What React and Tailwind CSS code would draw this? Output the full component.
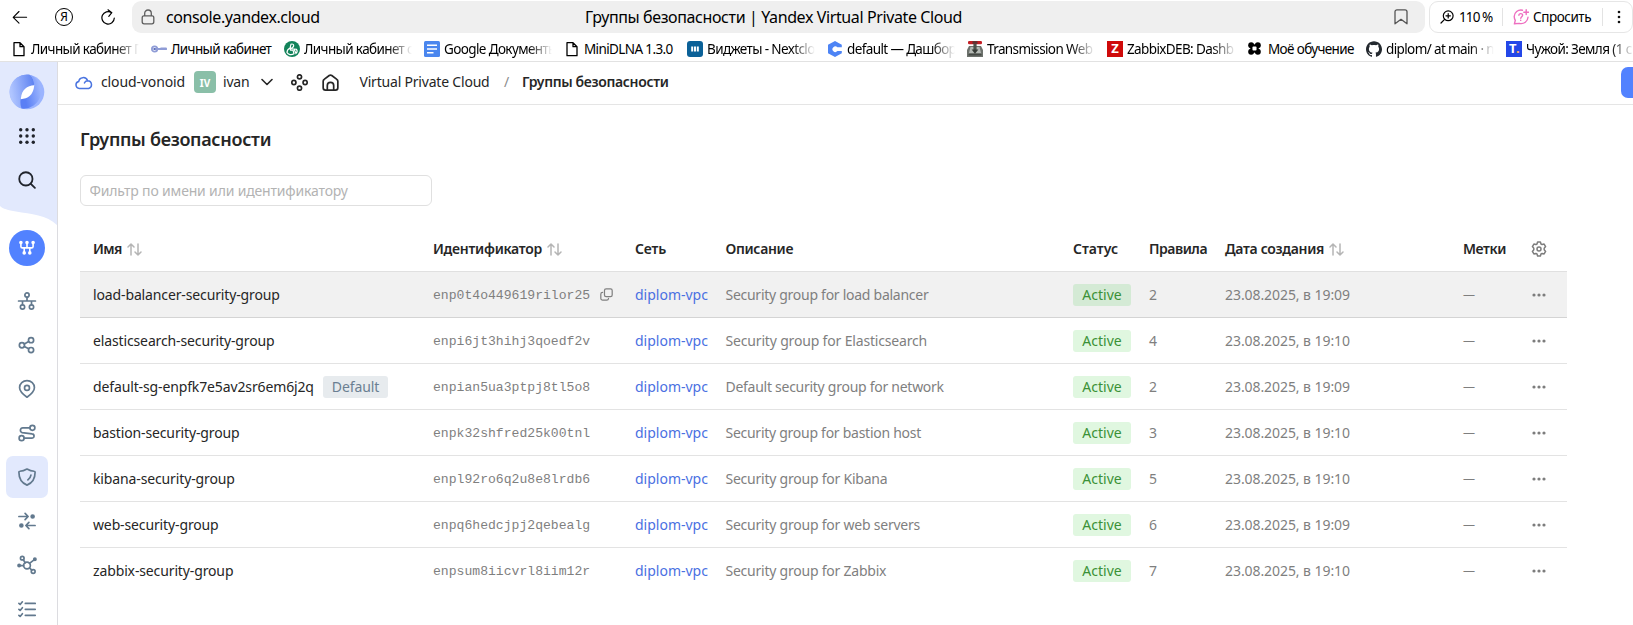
import React from "react";
import { SiGithub } from "react-icons/si";

const COLS =
  "grid grid-cols-[340px_202px_90.500px_347.500px_76px_76px_238px_64px_1fr] items-center pl-[13px]";

function Svg({ className, children, sw = 1.5, vb = "0 0 16 16" }) {
  return (
    <svg
      viewBox={vb}
      className={className}
      fill="none"
      stroke="currentColor"
      strokeWidth={sw}
      strokeLinecap="round"
      strokeLinejoin="round"
    >
      {children}
    </svg>
  );
}

/* ---------- browser chrome ---------- */

const DocIcon = () => (
  <Svg className="size-4 text-black" sw={1.3}>
    <path d="M3 1.7h6l4 4v9H3z M9 1.7v4h4" />
  </Svg>
);
const KeyIcon = () => (
  <Svg className="size-4 text-[#8f9cd6]" sw={1.8}>
    <circle cx="3.6" cy="8" r="2.7" />
    <path d="M3 8h12.4M10 7.4h5" />
    <circle cx="3.6" cy="8" r="0.8" fill="#4356a8" stroke="none" />
  </Svg>
);
const GreenIcon = () => (
  <svg viewBox="0 0 16 16" className="size-4">
    <circle cx="8" cy="8" r="8" fill="#12835a" />
    <path
      d="M7 3.2c1.8-.6 3 .4 2.6 2L8 7.6 6.2 6.4zM3 11.6c0-2 1-3.6 3-4.6l.6 2.2H9l1 3.6c-2.6 1.6-6 1-7-1.2zM10 8l2.4.2c1 1.4 1 3-.4 4.2z"
      fill="none"
      stroke="#fff"
      strokeWidth="1.2"
    />
  </svg>
);
const DocsIcon = () => (
  <svg viewBox="0 0 16 16" className="size-4">
    <rect width="16" height="16" rx="1.5" fill="#4a86ee" />
    <path d="M3 4.2h10M3 8h10M3 11.8h6.5" stroke="#fff" strokeWidth="1.6" />
  </svg>
);
const WidgetIcon = () => (
  <svg viewBox="0 0 16 16" className="size-4">
    <rect width="16" height="16" rx="3" fill="#0b6198" />
    <path d="M5.2 5.5v5M8 5.5v5M10.8 5.5v5" stroke="#fff" strokeWidth="2" />
  </svg>
);
const CIcon = () => (
  <svg viewBox="0 0 16 16" className="size-4">
    <path
      d="M8 0l6.8 3.8v2.5h-4.4A2.8 2.8 0 1 0 10.4 10h4.4v2.3L8 16 1 12.2V3.8z"
      fill="#4d84f5"
    />
  </svg>
);
const TransmissionIcon = () => (
  <svg viewBox="0 0 16 16" className="size-4">
    <path d="M2 5h12L16 9v7H0V9z" fill="#6d726d" />
    <path d="M3.500 6h9l1.500 6H2z" fill="#b4b9b4" />
    <rect x="1" y="0" width="14" height="3.2" rx="1.2" fill="#c41f25" />
    <rect x="5.5" y="0.2" width="5" height="2.6" fill="#5c3334" />
    <rect x="6.4" y="3" width="3.200" height="6" fill="#4d534d" />
    <path d="M4.6 8.6h6.8L8 12.8z" fill="#363b36" />
    <path d="M1.5 13.8h13" stroke="#3c403c" strokeWidth="1.2" />
  </svg>
);
const LetterBox = ({ bg, children }) => (
  <span
    className={`flex size-4 items-center justify-center text-[13px] font-bold leading-none tracking-normal text-white ${bg}`}
  >
    {children}
  </span>
);
const KnotIcon = () => (
  <svg viewBox="0 0 14 14" className="size-[13px]" fill="#000">
    <circle cx="3.4" cy="3.4" r="3.2" />
    <circle cx="10.6" cy="3.4" r="3.2" />
    <circle cx="3.4" cy="10.6" r="3.2" />
    <circle cx="10.6" cy="10.6" r="3.2" />
    <path d="M2.5 2.5h9v9h-9z" />
    <rect x="4.800" y="4.800" width="4.400" height="4.400" rx="1" fill="#fff" />
  </svg>
);
const TIcon = () => (
  <span className="flex size-4 items-center justify-center bg-[#2447e8] text-[13px] font-bold leading-none text-white">
    T<span className="text-[#ffb061]">.</span>
  </span>
);

const BOOKMARKS = [
  { w: "w-[140px]", icon: <DocIcon />, text: "Личный кабинет П", fade: true },
  { w: "w-[133px]", icon: <KeyIcon />, text: "Личный кабинет" },
  { w: "w-[140px]", icon: <GreenIcon />, text: "Личный кабинет с", fade: true },
  { w: "w-[140px]", icon: <DocsIcon />, text: "Google Документы", fade: true },
  { w: "w-[123px]", icon: <DocIcon />, text: "MiniDLNA 1.3.0" },
  { w: "w-[140px]", icon: <WidgetIcon />, text: "Виджеты - Nextclo", fade: true },
  { w: "w-[140px]", icon: <CIcon />, text: "default — Дашбор", fade: true },
  { w: "w-[140px]", icon: <TransmissionIcon />, text: "Transmission Web", fade: true },
  { w: "w-[141px]", icon: <LetterBox bg="bg-[#cf0a0a]">Z</LetterBox>, text: "ZabbixDEB: Dashb", fade: true },
  { w: "w-[118px]", icon: <KnotIcon />, text: "Моё обучение" },
  { w: "w-[140px]", icon: <SiGithub className="size-4 text-[#24292f]" />, text: "diplom/ at main · n", fade: true },
  { w: "w-[140px]", icon: <TIcon />, text: "Чужой: Земля (1 с", fade: true },
];

function AddressRow() {
  return (
    <div className="flex h-[33px] items-center pt-px text-black">
      <div className="flex w-[132px] shrink-0 items-center">
        <Svg className="ml-3 size-4" sw={1.1}>
          <path d="M14.6 8.3H1.4M7 2.5L1.2 8.3 7 14.1" />
        </Svg>
        <span className="ml-[27px] flex size-[18px] items-center justify-center rounded-full border border-black text-[12px] leading-none">
          Я
        </span>
        <Svg className="ml-[27px] size-4" sw={1.2}>
          <path d="M14.300 9A6.200 6.200 0 1 1 11.600 3.700M8 .8l3.8 2.9-3 3.600" />
        </Svg>
      </div>
      <div className="flex h-8 w-[1293px] shrink-0 items-center rounded-[9px] bg-[#efefef]">
        <Svg className="ml-[9px] h-4 w-[14px] text-[#5e5e5e]" sw={1.3} vb="0 0 14 16">
          <path d="M2.8 6.8h8.4c.9 0 1.6.9 1.6 2v4c0 1.2-.8 2-1.9 2H3.1c-1.1 0-1.9-.8-1.9-2v-4c0-1.100.7-2 1.6-2zM3.700 6.800V4.300a3.300 3.300 0 0 1 6.600 0v2.500" />
        </Svg>
        <span className="ml-[11px] w-[419px] text-base tracking-[-0.4px]">console.yandex.cloud</span>
        <span className="text-base tracking-[-0.385px]">
          Группы безопасности | Yandex Virtual Private Cloud
        </span>
        <Svg className="ml-auto mr-[17px] h-4 w-[14px] text-[#555]" sw={1.3} vb="0 0 14 16">
          <path d="M1 14.800V2.800a2 2 0 0 1 2-2h8a2 2 0 0 1 2 2v12l-6-4.500z" />
        </Svg>
      </div>
      <div className="ml-1 flex h-8 flex-1 items-center rounded-[9px] border border-[#e6e6e6] bg-white text-[13.5px]">
        <Svg className="ml-[10px] size-[14px]" sw={1.200} vb="0 0 14 14">
          <circle cx="8.200" cy="5.800" r="4.900" />
          <path d="M4.600 9.400L1 13M8.200 3.600v4.400M6 5.800h4.400" />
        </Svg>
        <span className="ml-[5px] w-[43px] tracking-[-0.9px]">110 %</span>
        <span className="h-[18px] w-px bg-[#e3e3e3]" />
        <Svg className="ml-[10px] size-4 text-[#ee6fc0]" sw={1.4}>
          <path d="M9.500 1.200C5 .300 1.200 3.400 1.200 7.600c0 1.600.5 2.700 1.100 3.700L1.400 14.800l5-.4c4.600.9 8.300-1.900 8.600-6.100" />
          <path d="M5.900 6.200c0-2.200 3.900-2.100 3.700.1-.1 1.400-1.700 1.400-1.800 2.900M7.700 11.300v.1M13.200.800v4.800M10.800 3.200h4.800" />
        </Svg>
        <span className="ml-[4px] w-[69px] whitespace-nowrap tracking-[-0.46px]">Спросить</span>
        <span className="h-[18px] w-px bg-[#e3e3e3]" />
        <svg viewBox="0 0 4 14" className="ml-[14px] h-[14px] w-1 shrink-0" fill="#111">
          <circle cx="2" cy="2" r="1.300" />
          <circle cx="2" cy="7" r="1.300" />
          <circle cx="2" cy="12" r="1.300" />
        </svg>
      </div>
    </div>
  );
}

function Bookmarks() {
  return (
    <div className="flex h-[29px] items-center overflow-hidden border-b border-[#e2e2e2] pl-[11px] pt-[5px] pb-[2px]">
      {BOOKMARKS.map((b, i) => (
        <div key={i} className={`flex shrink-0 items-center gap-1 pr-3 text-[13.5px] tracking-[-0.62px] text-black ${b.w}`}>
          <span className="flex size-4 shrink-0 items-center">{b.icon}</span>
          <span
            className={
              b.fade
                ? "min-w-0 flex-1 overflow-hidden whitespace-nowrap pt-px leading-5 [mask-image:linear-gradient(to_right,#000_78%,transparent)]"
                : "whitespace-nowrap pt-px leading-5"
            }
          >
            {b.text}
          </span>
        </div>
      ))}
    </div>
  );
}

/* ---------- sidebar ---------- */

const NAV = [
  {
    id: "subnets",
    icon: (
      <>
        <circle cx="8" cy="2.700" r="1.900" />
        <circle cx="4" cy="13.300" r="1.900" />
        <circle cx="12" cy="13.300" r="1.900" />
        <path d="M8 4.700V8M.500 8h15M4 8v3.300M12 8v3.300" />
      </>
    ),
  },
  {
    id: "peering",
    icon: (
      <>
        <circle cx="3.500" cy="8.200" r="2.300" />
        <circle cx="11.600" cy="3.700" r="2.300" />
        <circle cx="11.600" cy="12.500" r="2.300" />
        <path d="M5.600 7.100l3.900-2.200M5.600 9.300l3.900 2.100" />
      </>
    ),
  },
  {
    id: "addresses",
    icon: (
      <>
        <path d="M8 15.300C4.500 12.700 1.400 9.800 1.400 6.800a6.600 6.200 0 0 1 13.200 0c0 3-3.100 5.900-6.600 8.500z" />
        <circle cx="8" cy="7" r="2.200" />
      </>
    ),
  },
  {
    id: "routes",
    icon: (
      <>
        <circle cx="12.800" cy="3.400" r="2.200" />
        <circle cx="3.200" cy="12.600" r="2.200" />
        <path d="M10.500 3.400H4.300a2.200 2.200 0 0 0-.6 4.300l8.800 1.100a1.900 1.900 0 0 1-.3 3.800H5.500" />
      </>
    ),
  },
  {
    id: "security",
    active: true,
    icon: (
      <>
        <path d="M8 .900c2.300 1.300 4.500 1.900 6.300 2 .5 0 .9.400.9.900 0 5.500-2.400 9.500-7.200 11.400C3.200 13.300.8 9.300.8 3.800c0-.5.4-.9.9-.9C3.500 2.800 5.700 2.200 8 .900z" />
        <path d="M8.700 10.600c1.500-.8 2.500-2.400 2.800-4.200" />
      </>
    ),
  },
  {
    id: "gateways",
    icon: (
      <>
        <path d="M.800 4h8M6.300 1.300L9 4 6.300 6.700M15.200 12h-8M9.700 9.300L7 12l2.700 2.700" />
        <circle cx="13" cy="4" r="1.300" fill="currentColor" />
        <circle cx="3" cy="12" r="1.300" fill="currentColor" />
      </>
    ),
  },
  {
    id: "topology",
    icon: (
      <>
        <circle cx="8" cy="8.500" r="3" />
        <circle cx="3.800" cy="1.900" r="1.600" />
        <circle cx="13.500" cy="13.800" r="1.700" />
        <circle cx="15" cy="2.900" r="1" fill="currentColor" />
        <circle cx="1" cy="8.500" r="1" fill="currentColor" />
        <path d="M6.400 6l-1.700-2.700M10.200 6.500L14 3.600M5 8.500H2M10.300 10.600l1.900 1.900" />
      </>
    ),
  },
  {
    id: "operations",
    icon: (
      <path d="M6.500 3H15.300M6.500 8.300H15.300M6.500 13.600H15.300M.800 3l1.100 1L3.900 1.600M.800 8.300l1.100 1 2-2.400M.800 13.600l1.100 1 2-2.400" />
    ),
  },
];

function Sidebar() {
  return (
    <aside className="relative flex w-[58px] shrink-0 flex-col items-center border-r border-[#dcdce0] bg-white pr-1 pt-[7px]">
      <svg viewBox="0 0 57 163" className="absolute left-0 top-0 h-[163px] w-[57px]">
        <path d="M0 0h57v163C47 153 31 152 16 149.500 8 148 3 147 0 144z" fill="#e2e9fd" />
      </svg>
      <div className="relative flex h-[45px] shrink-0 items-center">
        <svg viewBox="0 0 36 36" className="size-9">
          <defs>
            <linearGradient id="lgA" x1="0" y1="0.200" x2="1" y2="0">
              <stop offset="0" stopColor="#b0c5ff" />
              <stop offset="1" stopColor="#5a7ff0" />
            </linearGradient>
            <linearGradient id="lgB" x1="0.100" y1="0.300" x2="1" y2="0">
              <stop offset="0" stopColor="#5a7ff5" />
              <stop offset="1" stopColor="#a9c0ff" />
            </linearGradient>
          </defs>
          <circle cx="18" cy="18" r="17.300" fill="#9bb4ff" />
          <path d="M20 .600A17.500 17.500 0 0 0 12.500 34.600c-1.500-4-1.500-8.600-.2-12.600C14 16 24 14 25 11.500 25.500 7 23.500 2.500 20 .600z" fill="url(#lgA)" />
          <path d="M12.500 34.600A17.500 17.500 0 0 0 20 .600C23.500 2.500 25.500 7 25 11.500L12.300 22c-1.300 4-1.300 8.600.2 12.600z" fill="url(#lgB)" />
          <path d="M25.300 11.200c-7.300.6-12.600 3.800-13.600 14 7.300-.7 12.600-4 13.600-14z" fill="#fff" />
        </svg>
      </div>
      <div className="relative flex h-11 shrink-0 items-center">
        <svg viewBox="0 0 16 16" className="size-4" fill="#20242c">
          {[1.7, 8, 14.3].map((y) =>
            [1.7, 8, 14.3].map((x) => <circle key={`${x}-${y}`} cx={x} cy={y} r="1.700" />)
          )}
        </svg>
      </div>
      <div className="relative flex h-11 shrink-0 items-center">
        <Svg className="size-[18px] text-[#20242c]" sw={1.6}>
          <circle cx="7" cy="7" r="5.900" />
          <path d="M11.400 11.400L15 15" />
        </Svg>
      </div>
      <div className="mt-7 flex size-9 shrink-0 items-center justify-center rounded-full bg-[#5282ff] text-white">
        <Svg className="size-4" sw={1.600}>
          <path d="M1.900 3v3.400c0 1 .5 1.500 1.500 1.500h9.200c1 0 1.500-.5 1.500-1.500V3M8 3v4.900M5.200 7.900v4.600M10.800 7.900v4.600" />
          <circle cx="1.900" cy="2.600" r="1" fill="currentColor" />
          <circle cx="8" cy="2.600" r="1" fill="currentColor" />
          <circle cx="14.100" cy="2.600" r="1" fill="currentColor" />
          <circle cx="5.200" cy="12.900" r="1" fill="currentColor" />
          <circle cx="10.800" cy="12.900" r="1" fill="currentColor" />
        </Svg>
      </div>
      <nav className="mt-[14px] flex shrink-0 flex-col gap-0.5">
        {NAV.map((n) => (
          <a
            key={n.id}
            className={`flex size-[42px] items-center justify-center rounded-[7px] ${
              n.active ? "bg-[#e2e9fd]" : ""
            }`}
          >
            <Svg className="size-[18px] overflow-visible text-[#62798e]" sw={1.5}>
              {n.icon}
            </Svg>
          </a>
        ))}
      </nav>
    </aside>
  );
}

/* ---------- page ---------- */

function Header() {
  return (
    <header className="flex h-[43px] items-center whitespace-nowrap border-b border-[#e5e5e5] pb-0.5 text-sm text-[#262626]">
      <Svg className="ml-[17px] h-[15px] w-[18px] text-[#4a74e0]" sw={1.5} vb="0 0 18 15">
        <path d="M4.300 13.500a3.500 3.500 0 0 1-.6-6.900A4.600 4.600 0 0 1 12.600 5.700a4 4 0 0 1 1.100 7.800zM12.600 5.700c-1.500 0-2.700.8-3.200 2.200" />
      </Svg>
      <span className="ml-2 w-[84px] tracking-[-0.12px]">cloud-vonoid</span>
      <span className="ml-[9px] flex size-[22px] items-center justify-center rounded-[4px] bg-[#8abfa8] pt-px text-[10px] font-bold leading-none text-white">
        IV
      </span>
      <span className="ml-[7px] w-[38px] tracking-[-0.2px]">ivan</span>
      <Svg className="h-2 w-3" sw={1.6} vb="0 0 12 8">
        <path d="M1 1.500l5 5 5-5" />
      </Svg>
      <Svg className="ml-[18px] size-[17px]" sw={1.6}>
        <circle cx="8" cy="2.700" r="1.950" />
        <circle cx="8" cy="13.300" r="1.950" />
        <circle cx="2.700" cy="8" r="1.950" />
        <circle cx="13.300" cy="8" r="1.950" />
      </Svg>
      <Svg className="ml-[14px] h-[17px] w-[17px]" sw={1.6}>
        <path d="M1.100 6.800c0-.7.3-1.300.9-1.700l4.800-3.700a2 2 0 0 1 2.400 0L14 5.100c.6.400.9 1 .9 1.700v6.200a2.200 2.200 0 0 1-2.200 2.200H3.300a2.200 2.200 0 0 1-2.200-2.200zM5 15v-4.200a3 3 0 0 1 6 0V15" />
      </Svg>
      <span className="ml-[20.500px] w-[143.500px] tracking-[-0.2px]">Virtual Private Cloud</span>
      <span className="w-[19px] pl-px text-[#8c8c8c]">/</span>
      <span className="font-semibold tracking-[-0.34px]">Группы безопасности</span>
      <span className="ml-auto h-[31px] w-[12px] rounded-l-[7px] bg-[#5282ff]" />
    </header>
  );
}

const SortIcon = () => (
  <Svg className="ml-[5px] h-[13px] w-[15px] text-[#b5b5b5]" sw={1.5} vb="0 0 15 13">
    <path d="M4 12V1M1 4l3-3 3 3M11 1v11M8 9l3 3 3-3" />
  </Svg>
);
const CopyIcon = () => (
  <Svg className="ml-[10px] size-[13px] text-[#808080]" sw={1.5}>
    <rect x="5.500" y="1" width="9.500" height="9.500" rx="2" />
    <path d="M3.200 5.500A2.200 2.200 0 0 0 1 7.700v5A2.300 2.300 0 0 0 3.300 15h5a2.200 2.200 0 0 0 2.200-2v-.3" />
  </Svg>
);
const GearIcon = () => (
  <Svg className="size-4 text-[#7d7d7d]" sw={1.5}>
    <path d="M6.600 1h2.800l.6 2 1.100.6 2-.5 1.500 2.500L13.200 7.200v1.600l1.400 1.600-1.500 2.500-2-.5-1.100.6-.6 2H6.600l-.6-2-1.100-.6-2 .5-1.500-2.500L2.800 8.800V7.200L1.400 5.600l1.500-2.500 2 .5L6 3z" />
    <circle cx="8" cy="8" r="2" />
  </Svg>
);
const Dots = () => (
  <svg viewBox="0 0 14 4" className="h-1 w-[14px]" fill="#7d7d7d">
    <circle cx="2" cy="2" r="1.600" />
    <circle cx="7" cy="2" r="1.600" />
    <circle cx="12" cy="2" r="1.600" />
  </svg>
);

const ROWS = [
  ["load-balancer-security-group", "enp0t4o449619rilor25", "Security group for load balancer", 2, "19:09"],
  ["elasticsearch-security-group", "enpi6jt3hihj3qoedf2v", "Security group for Elasticsearch", 4, "19:10"],
  ["default-sg-enpfk7e5av2sr6em6j2q", "enpian5ua3ptpj8tl5o8", "Default security group for network", 2, "19:09"],
  ["bastion-security-group", "enpk32shfred25k00tnl", "Security group for bastion host", 3, "19:10"],
  ["kibana-security-group", "enpl92ro6q2u8e8lrdb6", "Security group for Kibana", 5, "19:10"],
  ["web-security-group", "enpq6hedcjpj2qebealg", "Security group for web servers", 6, "19:09"],
  ["zabbix-security-group", "enpsum8iicvrl8iim12r", "Security group for Zabbix", 7, "19:10"],
];

function Table() {
  return (
    <div className="mt-[21px] w-[1487px] text-sm text-[#7f7f7f]">
      <div className={`${COLS} h-11 font-semibold text-[#262626]`}>
        <span className="flex items-center tracking-[-0.6px]">Имя<SortIcon /></span>
        <span className="flex items-center tracking-[-0.28px]">Идентификатор<SortIcon /></span>
        <span className="tracking-[-0.2px]">Сеть</span>
        <span className="tracking-[-0.33px]">Описание</span>
        <span>Статус</span>
        <span className="tracking-[-0.48px]">Правила</span>
        <span className="flex items-center tracking-[-0.32px]">Дата создания<SortIcon /></span>
        <span className="tracking-[-0.4px]">Метки</span>
        <span className="pl-1"><GearIcon /></span>
      </div>
      {ROWS.map(([name, id, desc, rules, time], i) => (
        <div
          key={id}
          className={`${COLS} h-[46px] border-t ${
            i === 0 ? "border-[#e0e0e0] bg-[#f1f1f1]" : i === 1 ? "border-[#d4d4d4]" : "border-[#e3e3e3]"
          }`}
        >
          <span className="flex items-center tracking-[-0.13px] text-[#262626]">
            {name}
            {i === 2 && (
              <span className="ml-[9px] rounded-[3px] bg-[#e7ebee] px-[9px] leading-[22px] text-[#6b7f92]">
                Default
              </span>
            )}
          </span>
          <span className="flex items-center font-['Liberation_Mono',monospace] text-[13.1px]">
            <span className="pt-[3px]">{id}</span>
            {i === 0 && <CopyIcon />}
          </span>
          <span className="text-[#4a70e2]">diplom-vpc</span>
          <span className={i === 1 ? "tracking-[-0.17px]" : i > 3 ? "tracking-[-0.23px]" : "tracking-[-0.27px]"}>
            {desc}
          </span>
          <span>
            <span
              className={`block h-[22px] w-[58px] rounded-[3px] text-center leading-[21px] text-[#3b9137] ${
                i === 0 ? "bg-[#d4ead5]" : "bg-[#e0f7e0]"
              }`}
            >
              Active
            </span>
          </span>
          <span>{rules}</span>
          <span className="tracking-[-0.07px]">23.08.2025, в {time}</span>
          <span className="text-xs">—</span>
          <span className="pl-[5px]"><Dots /></span>
        </div>
      ))}
    </div>
  );
}

export default function App() {
  return (
    <div className="flex h-[625px] w-[1633px] flex-col overflow-hidden bg-white font-['Noto_Sans',sans-serif]">
      <AddressRow />
      <Bookmarks />
      <div className="flex min-h-0 flex-1">
        <Sidebar />
        <div className="min-w-0 flex-1">
          <Header />
          <main className="pl-[22px] pt-[20px]">
            <h1 className="text-[18px] font-semibold leading-7 tracking-[-0.3px] text-[#262626]">
              Группы безопасности
            </h1>
            <input
              className="mt-[22px] block h-[31px] w-[352px] rounded-[6px] border border-[#e0e0e0] px-[8.500px] text-sm tracking-[-0.17px] outline-none placeholder:text-[#b3b3b3]"
              placeholder="Фильтр по имени или идентификатору"
            />
            <Table />
          </main>
        </div>
      </div>
    </div>
  );
}
